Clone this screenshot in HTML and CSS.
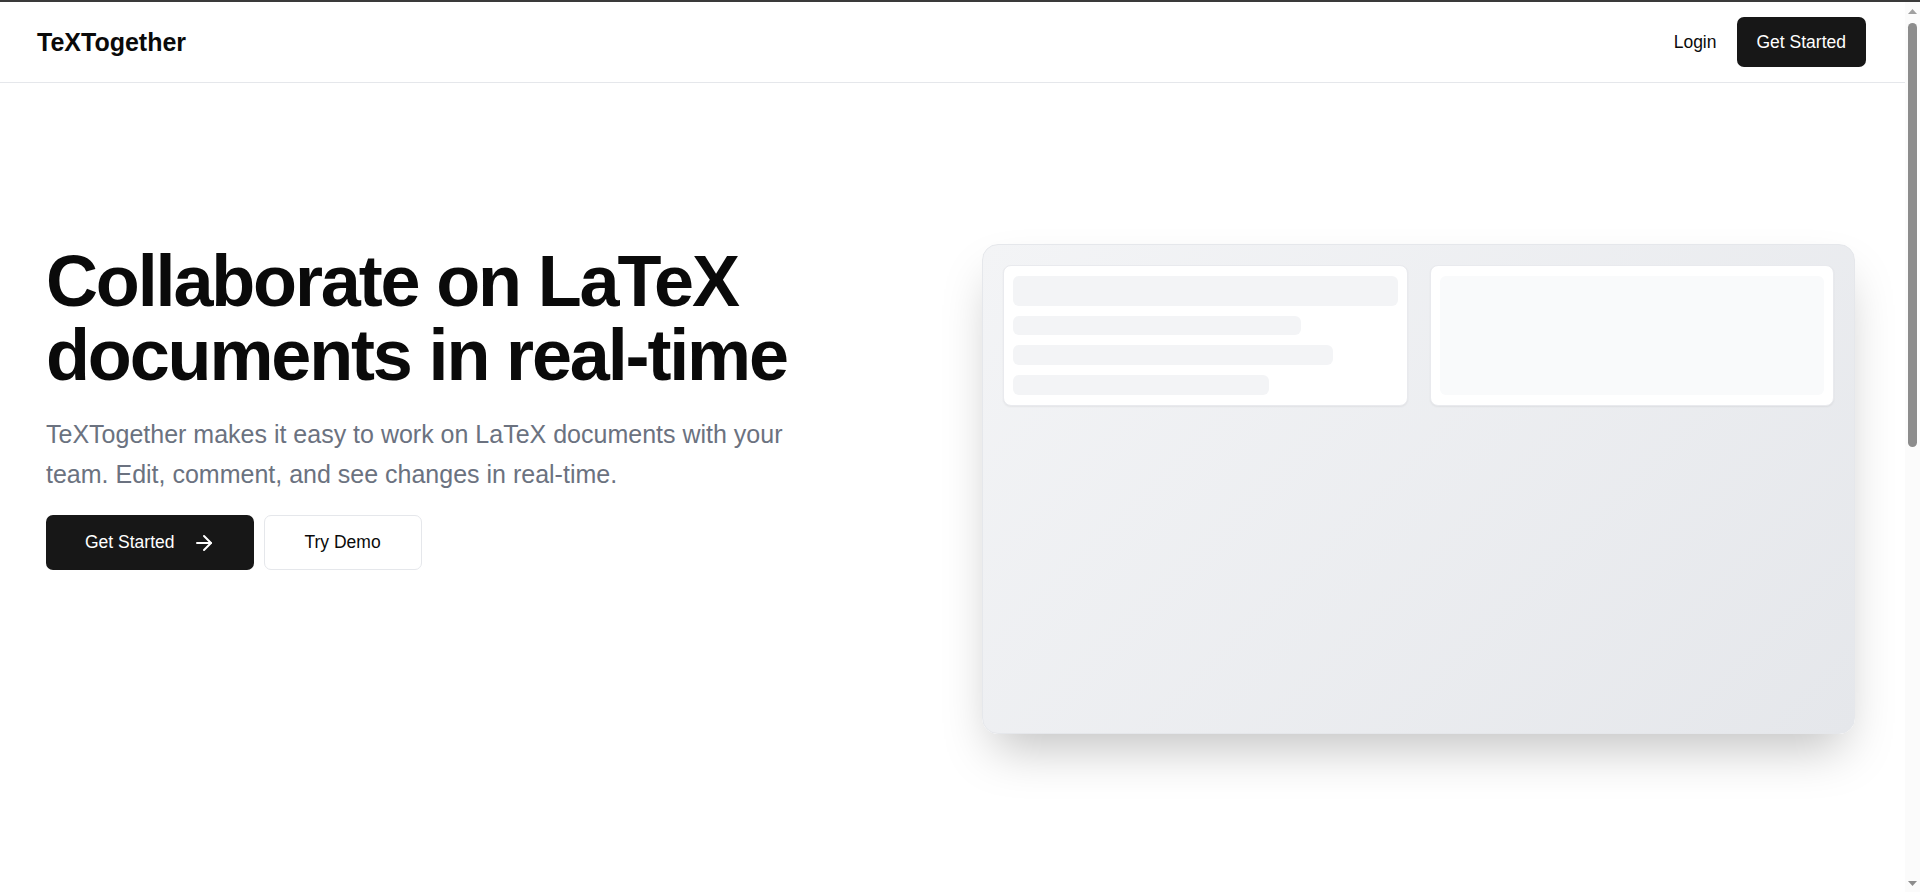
FILE: index.html
```html
<!DOCTYPE html>
<html lang="en">
<head>
<meta charset="utf-8">
<title>TeXTogether</title>
<link rel="stylesheet" href="styles.css">
</head>
<body>
<div class="frame-top"></div>
<header class="site-header">
  <div class="logo">TeXTogether</div>
  <nav class="nav">
    <a class="nav-link" href="#">Login</a>
    <a class="btn btn-dark btn-nav" href="#">Get Started</a>
  </nav>
</header>
<main>
  <section class="hero">
    <div class="hero-copy">
      <h1 class="hero-title">Collaborate on LaTeX documents in real-time</h1>
      <p class="hero-text">TeXTogether makes it easy to work on LaTeX documents with your team. Edit, comment, and see changes in real-time.</p>
      <div class="hero-actions">
        <a class="btn btn-dark btn-hero" href="#">Get Started
          <svg class="icon-arrow" viewBox="0 0 24 24" fill="none" stroke="currentColor" stroke-width="2" stroke-linecap="round" stroke-linejoin="round"><path d="M5 12h14"/><path d="m12 5 7 7-7 7"/></svg>
        </a>
        <a class="btn btn-light btn-hero" href="#">Try Demo</a>
      </div>
    </div>
    <div class="preview">
      <div class="preview-row">
        <div class="panel">
          <div class="bar bar-title"></div>
          <div class="bar bar-75"></div>
          <div class="bar bar-83"></div>
          <div class="bar bar-66"></div>
        </div>
        <div class="panel">
          <div class="panel-box"></div>
        </div>
      </div>
    </div>
  </section>
  <section class="below"></section>
</main>
<div class="scrollbar" aria-hidden="true">
  <svg class="scroll-arrow" viewBox="0 0 15 17"><path d="M3 12 L7.5 7 L12 12 Z" fill="#a0a0a0"/></svg>
  <div class="scroll-track"><div class="scroll-thumb"></div></div>
  <svg class="scroll-arrow" viewBox="0 0 15 17"><path d="M3 6 L7.5 11 L12 6 Z" fill="#8c8c8c"/></svg>
</div>
</body>
</html>
```

FILE: styles.css
```css
* { box-sizing: border-box; }
html, body { margin: 0; padding: 0; }
body {
  font-family: "Liberation Sans", Arial, sans-serif;
  color: #0a0a0a;
  background: #fff;
}
a { text-decoration: none; color: inherit; }

.frame-top { height: 2px; background: #3a3a3a; }

.site-header {
  height: 81px;
  display: flex;
  align-items: center;
  justify-content: space-between;
  padding: 0 54px 0 37px;
  border-bottom: 1px solid #e5e7eb;
}
.logo {
  font-size: 25px;
  font-weight: 700;
}
.nav { display: flex; align-items: center; gap: 20px; }
.nav-link { font-size: 17.5px; color: #0a0a0a; }

.btn {
  display: inline-flex;
  align-items: center;
  justify-content: center;
  font-size: 17.5px;
  border-radius: 7px;
}
.btn-dark { background: #171717; color: #fff; }
.btn-light { background: #fff; color: #0a0a0a; border: 1px solid #e5e7eb; }
.btn-nav { height: 50px; padding: 0 20px; }

.hero {
  display: grid;
  grid-template-columns: 873px 873px;
  column-gap: 63px;
  padding: 161px 0 0 46px;
  align-items: start;
}
.hero-title {
  margin: 0;
  font-size: 72px;
  line-height: 74px;
  font-weight: 700;
  letter-spacing: -2.15px;
  color: #0a0a0a;
}
.hero-text {
  margin: 22px 0 0;
  font-size: 25px;
  line-height: 40px;
  color: #6b7280;
  max-width: 780px;
}
.hero-actions { display: flex; gap: 10px; margin-top: 21px; }
.btn-hero { height: 55px; padding: 0 39px; }
.btn-light.btn-hero { padding: 0 40px; }
.icon-arrow { width: 24px; height: 24px; margin-left: 17px; margin-right: -1px; }

.preview {
  height: 490px;
  border: 1px solid #e5e7eb;
  border-radius: 16px;
  background: linear-gradient(135deg, #f3f4f6 0%, #e5e7eb 100%);
  box-shadow: 0 25px 50px -12px rgba(0, 0, 0, 0.25);
  padding: 20px;
}
.preview-row {
  display: grid;
  grid-template-columns: 1fr 1fr;
  gap: 22px;
}
.panel {
  height: 141px;
  background: #fff;
  border-radius: 8px;
  box-shadow: 0 1px 2px rgba(0, 0, 0, 0.06);
  border: 1px solid #e9eaee;
  padding: 10px 9px;
  display: flex;
  flex-direction: column;
  gap: 10px;
}
.bar { background: #f3f4f6; border-radius: 6px; height: 20px; }
.bar-title { height: 30px; }
.bar-75 { width: 75%; }
.bar-83 { width: 83.3%; }
.bar-66 { width: 66.7%; }
.panel-box { flex: 1; background: #f9fafb; border-radius: 6px; }

.below { height: 1060px; }

/* window scrollbar as it appears in the screenshot */
.scrollbar {
  position: fixed;
  top: 2px;
  right: 0;
  bottom: 0;
  width: 15px;
  background: #fbfbfb;
  display: flex;
  flex-direction: column;
}
.scroll-arrow { width: 15px; height: 17px; flex: none; }
.scroll-track { flex: 1; padding: 4px 3px 0; }
.scroll-thumb { height: 424px; background: #8c8c8c; border-radius: 5px; }
```
